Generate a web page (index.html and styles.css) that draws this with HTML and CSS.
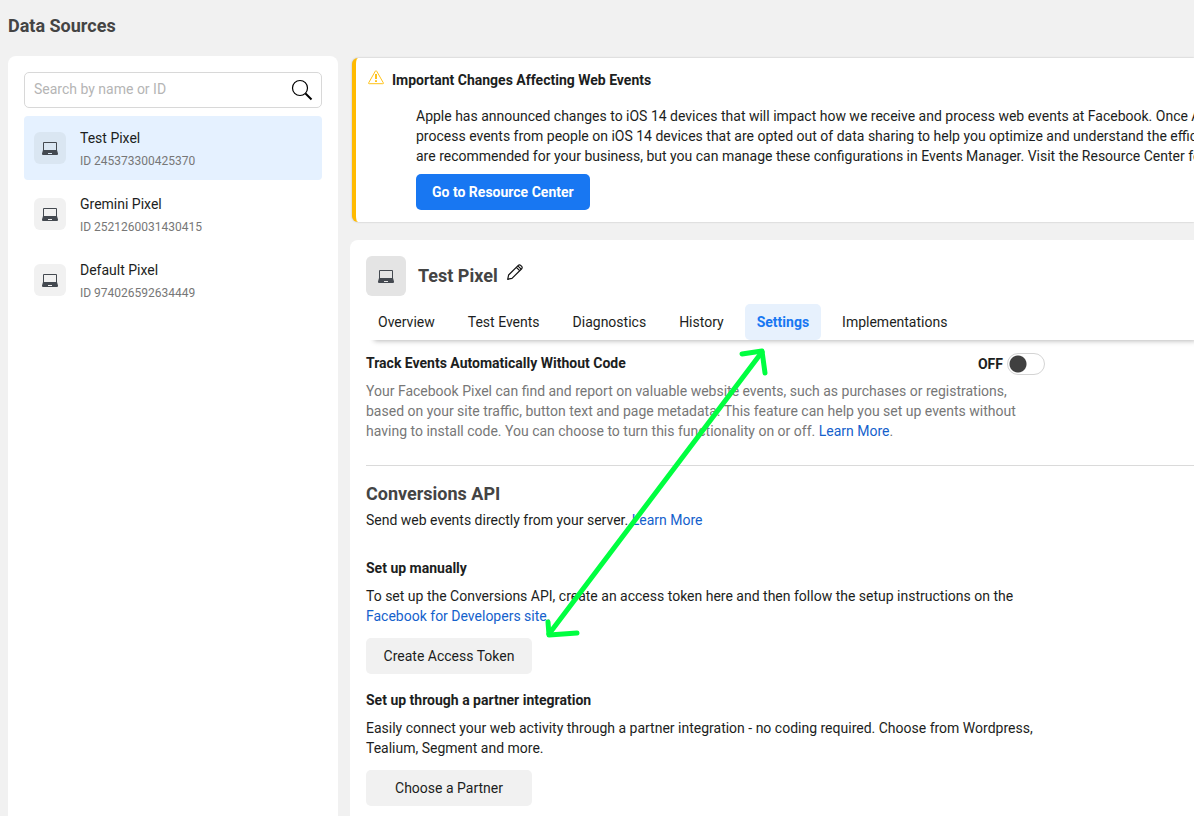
FILE: index.html
```html
<!DOCTYPE html>
<html lang="en">
<head>
    <meta charset="UTF-8">
    <meta name="viewport" content="width=device-width, initial-scale=1.0">
    <title>Data Sources</title>
    <link rel="stylesheet" href="styles.css">
</head>
<body>
    <svg class="sprite" width="0" height="0" aria-hidden="true">
        <symbol id="laptop" viewBox="0 0 16 14">
            <path fill="currentColor" fill-rule="evenodd" d="M2 1h12a1 1 0 0 1 1 1v7.500H1V2a1 1 0 0 1 1-1zM2 2v7h12V2z"/>
            <path fill="currentColor" fill-rule="evenodd" d="M1 9h14l1 3.500V13a1 1 0 0 1-1 1H1a1 1 0 0 1-1-1v-.5zM6 12v1h4v-1z"/>
        </symbol>
    </svg>

    <h1 class="page-title">Data Sources</h1>

    <div class="layout">
        <aside class="sidebar">
            <form class="search-bar">
                <input type="text" id="searchSources" placeholder="Search by name or ID" aria-label="Search by name or ID">
                <button type="button" aria-label="Search">
                    <svg width="22" height="22" viewBox="0 0 22 22" fill="none" stroke="#000">
                        <circle cx="9" cy="9" r="7.500" stroke-width="1.200"/>
                        <path d="M14.500 14.500l6 6" stroke-width="2"/>
                    </svg>
                </button>
            </form>
            <nav class="source-list">
                <a href="#" class="source active">
                    <span class="source-icon"><svg width="16" height="14"><use href="#laptop"/></svg></span>
                    <span class="source-text">
                        <span class="source-name">Test Pixel</span>
                        <span class="source-id">ID 245373300425370</span>
                    </span>
                </a>
                <a href="#" class="source">
                    <span class="source-icon"><svg width="16" height="14"><use href="#laptop"/></svg></span>
                    <span class="source-text">
                        <span class="source-name">Gremini Pixel</span>
                        <span class="source-id">ID 2521260031430415</span>
                    </span>
                </a>
                <a href="#" class="source">
                    <span class="source-icon"><svg width="16" height="14"><use href="#laptop"/></svg></span>
                    <span class="source-text">
                        <span class="source-name">Default Pixel</span>
                        <span class="source-id">ID 974026592634449</span>
                    </span>
                </a>
            </nav>
        </aside>

        <main class="content">
            <section class="notice">
                <svg class="notice-icon" width="16" height="15" viewBox="0 0 16 15" fill="none" stroke="#ffc21a">
                    <path d="M7.300 1.200a.8.800 0 0 1 1.400 0l6.600 11.600a.6.600 0 0 1-.5.900H1.200a.6.600 0 0 1-.5-.9z"/>
                    <path d="M8 4v5M8 10.300v1.700" stroke-width="2"/>
                </svg>
                <div class="notice-body">
                    <h2>Important Changes Affecting Web Events</h2>
                    <p>
                        Apple has announced changes to iOS 14 devices that will impact how we receive and process web events at Facebook. Once Apple<br>
                        process events from people on iOS 14 devices that are opted out of data sharing to help you optimize and understand the efficacy<br>
                        are recommended for your business, but you can manage these configurations in Events Manager. Visit the Resource Center for
                    </p>
                    <button type="button" class="btn btn-primary">Go to Resource Center</button>
                </div>
            </section>

            <section class="panel">
                <div class="panel-header">
                    <span class="panel-icon"><svg width="16" height="14"><use href="#laptop"/></svg></span>
                    <h2>Test Pixel</h2>
                    <button type="button" class="edit-btn" aria-label="Edit name">
                        <svg width="16" height="16" viewBox="0 0 16 16" fill="none" stroke="#111" stroke-width="1.200" stroke-linejoin="round">
                            <path d="M.7 15.300l.9-4.300L11.300 1.300a1.600 1.600 0 0 1 2.300 0l1.100 1.100a1.600 1.600 0 0 1 0 2.300L5 14.400z"/>
                            <path d="M9.300 3.300l3.400 3.400M10.800 1.800l3.400 3.400"/>
                        </svg>
                    </button>
                </div>

                <nav class="tabs">
                    <a href="#">Overview</a>
                    <a href="#">Test Events</a>
                    <a href="#">Diagnostics</a>
                    <a href="#">History</a>
                    <a href="#" class="active">Settings</a>
                    <a href="#">Implementations</a>
                </nav>

                <div class="tracking">
                    <div class="tracking-head">
                        <h3>Track Events Automatically Without Code</h3>
                        <label class="toggle">
                            OFF
                            <input type="checkbox" role="switch">
                        </label>
                    </div>
                    <p>Your Facebook Pixel can find and report on valuable website events, such as purchases or registrations, based on your site traffic, button text and page metadata. This feature can help you set up events without having to install code. You can choose to turn this functionality on or off. <a href="#">Learn More</a>.</p>
                </div>

                <div class="conversions">
                    <h2>Conversions API</h2>
                    <p>Send web events directly from your server. <a href="#">Learn More</a></p>
                </div>

                <div class="setup">
                    <h3>Set up manually</h3>
                    <p>To set up the Conversions API, create an access token here and then follow the setup instructions on the <a href="#">Facebook for Developers site</a>.</p>
                    <button type="button" class="btn btn-wide">Create Access Token</button>
                </div>

                <div class="setup">
                    <h3>Set up through a partner integration</h3>
                    <p>Easily connect your web activity through a partner integration - no coding required. Choose from Wordpress, Tealium, Segment and more.</p>
                    <button type="button" class="btn btn-wide">Choose a Partner</button>
                </div>

                <!-- arrow from the Settings tab to the token button -->
                <svg class="arrow" width="240" height="300" viewBox="0 0 240 300" fill="none" stroke="#00ff40" stroke-width="5" stroke-linecap="round" stroke-linejoin="round">
                    <path d="M222 12L9 294"/>
                    <path d="M202 14L222 11L225 33"/>
                    <path d="M8 282L9 295L37 293"/>
                </svg>
            </section>
        </main>
    </div>
</body>
</html>
```

FILE: styles.css
```css
* {
    box-sizing: border-box;
}
body {
    display: flex;
    flex-direction: column;
    min-height: 100vh;
    margin: 0;
    padding-left: 8px;
    font-family: Roboto, sans-serif;
    font-size: 14px;
    line-height: 20px;
    color: #1c1e21;
    background: #f1f1f1;
    overflow-x: hidden;
}
h1, h2, h3, p {
    margin: 0;
}
h3 {
    font-size: 14px;
    font-weight: bold;
}
a {
    color: #1461cc;
    text-decoration: none;
}
button, input {
    font: inherit;
    color: inherit;
}
button {
    border: none;
    padding: 0;
    background: none;
    cursor: pointer;
}
svg {
    display: block;
}
.sprite {
    position: absolute;
}
.page-title {
    padding: 14px 0 18px;
    font-size: 18px;
    line-height: 24px;
    font-weight: bold;
    color: #444;
}
.layout {
    display: flex;
    flex: 1;
    gap: 12px;
}

/* sidebar */
.sidebar {
    flex: 0 0 330px;
    padding: 16px;
    background: #fff;
    border-radius: 8px 8px 0 0;
}
.search-bar {
    display: flex;
    align-items: center;
    height: 36px;
    padding: 0 8px 0 9px;
    border: 1px solid #d8d8d8;
    border-radius: 5px;
}
.search-bar input {
    flex: 1;
    min-width: 0;
    padding: 0 0 2px;
    border: none;
    outline: none;
    background: none;
}
.search-bar input::placeholder {
    color: #b5b5b5;
}
.source-list {
    display: flex;
    flex-direction: column;
    gap: 2px;
    margin-top: 8px;
}
.source {
    display: flex;
    align-items: center;
    gap: 14px;
    height: 64px;
    padding: 0 10px;
    border-radius: 4px;
    color: #1c1e21;
}
.source.active {
    background: #e5f1ff;
}
.source-icon, .panel-icon {
    display: flex;
    align-items: center;
    justify-content: center;
    color: #444950;
}
.source-icon {
    width: 32px;
    height: 32px;
    border-radius: 6px;
    background: #f1f1f1;
}
.source.active .source-icon {
    background: #dae6f2;
}
.source-text {
    display: flex;
    flex-direction: column;
    padding-top: 2px;
}
.source-name {
    line-height: 24px;
}
.source-id {
    font-size: 12px;
    line-height: 22px;
    color: #777;
}

/* main column */
.content {
    display: flex;
    flex-direction: column;
    flex: 1;
    min-width: 0;
}
.notice {
    display: flex;
    gap: 8px;
    margin: 2px 0 18px 2px;
    padding: 12px 0 12px 12px;
    border-left: 4px solid #ffba00;
    border-radius: 6px 0 0 6px;
    background: #fff;
    box-shadow: 0 0 2px rgba(0, 0, 0, 0.25);
    overflow: hidden;
}
.notice-icon {
    flex-shrink: 0;
}
.notice-body h2 {
    font-size: 14px;
    font-weight: bold;
}
.notice-body p {
    margin: 16px 0 8px 24px;
    white-space: nowrap;
}
.btn {
    height: 36px;
    padding: 0 16px;
    border-radius: 5px;
    background: #f1f1f1;
}
.btn-primary {
    margin-left: 24px;
    font-weight: bold;
    color: #fff;
    background: #1877f2;
}
.btn-wide {
    width: 166px;
    margin-top: 12px;
}

.panel {
    position: relative;
    flex: 1;
    padding: 16px 0 10px 16px;
    background: #fff;
    border-radius: 8px 0 0 0;
}
.panel-header {
    display: flex;
    align-items: center;
    gap: 12px;
}
.panel-icon {
    width: 40px;
    height: 40px;
    border-radius: 6px;
    background: #e4e4e4;
}
.panel h2 {
    font-size: 18px;
    line-height: 24px;
    font-weight: bold;
    color: #444;
}
.edit-btn {
    margin: 0 0 8px -3px;
}
.tabs {
    display: flex;
    gap: 9px;
    margin-top: 8px;
    box-shadow: 5px 4px 5px -3px rgba(0, 0, 0, 0.28);
}
.tabs a {
    padding: 8px 12px;
    border-radius: 5px;
    color: #1c1e21;
}
.tabs a.active {
    font-weight: bold;
    color: #1877f2;
    background: #e7f1fd;
}
.tracking {
    padding: 13px 0 24px;
    border-bottom: 1px solid #dadada;
}
.tracking-head {
    display: flex;
    justify-content: space-between;
    max-width: 679px;
}
.tracking p {
    max-width: 679px;
    margin-top: 6px;
    color: #777;
}
.toggle {
    display: flex;
    align-items: center;
    gap: 4px;
    height: 22px;
    font-weight: bold;
}
.toggle input {
    appearance: none;
    width: 38px;
    height: 22px;
    margin: 0;
    border: 1px solid #d4d4d4;
    border-radius: 11px;
    background: radial-gradient(circle at 10px 10px, #404040 8px, transparent 9px);
    cursor: pointer;
}
.toggle input:checked {
    background: radial-gradient(circle at 26px 10px, #1877f2 8px, transparent 9px);
}
.conversions {
    padding-top: 16px;
}
.conversions p {
    margin: 4px 0 28px;
}
.setup {
    margin-bottom: 16px;
}
.setup:last-of-type {
    margin-bottom: 0;
}
.setup p {
    max-width: 679px;
    margin-top: 8px;
}
.arrow {
    position: absolute;
    left: 190px;
    top: 100px;
    pointer-events: none;
}
```
